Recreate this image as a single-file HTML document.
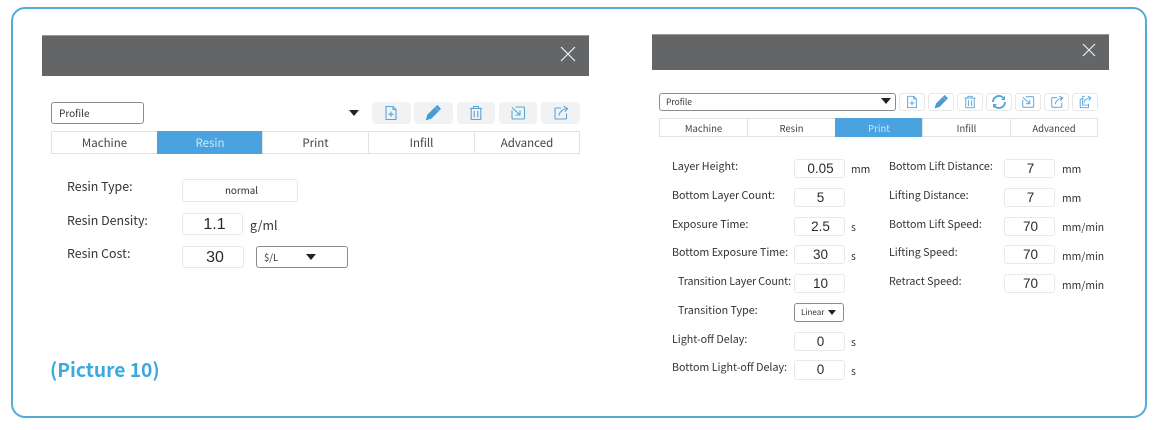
<!DOCTYPE html>
<html><head><meta charset="utf-8">
<style>
html,body{margin:0;padding:0;background:#fff}
#p{position:relative;width:1159px;height:430px;overflow:hidden;background:#fff;font-family:"Noto Sans CJK SC","Liberation Sans",sans-serif;color:#3a3a3a;filter:blur(.3px)}
#p div,#p svg{position:absolute;box-sizing:border-box}
.fr{left:11px;top:7px;width:1136px;height:411px;border:2px solid #52acd6;border-radius:14px}
.hd{background:#646566;border-top:1px solid #999}
.t{white-space:nowrap;line-height:14px}
.l{font-size:12.400px;color:#333}
.s{font-size:10.400px;color:#333}
.r{font-size:10.700px;color:#333}
.b{background:#fff;border:1px solid #e9e9e9;border-radius:3px;text-align:center;color:#2c2c2c;font-family:"Liberation Sans",sans-serif;font-size:13.500px;line-height:18px;padding-left:2px}
.bl{font-size:16px;line-height:22px;padding-left:4px}
.sel{background:#fff;border:1px solid #8d8d8d;border-radius:3px;color:#333}
.tab{border:1px solid #e2e2e2;text-align:center;color:#444;background:#fff;padding-left:0}
.tab.on{background:#4aa3de;color:#cfe6f6;border-color:#4aa3de}
.tl{top:131px;height:23px;line-height:22px;font-size:11.500px}
.tr{top:118px;height:19px;line-height:18px;font-size:9.500px}
.ib{background:#f1f2f3;border-radius:4px;top:102px;height:22px}
.ib2{background:#fff;border:1px solid #e8e8e8;border-radius:3px;top:93px;height:18px}
svg.i{fill:none;stroke:#5aa5d8;stroke-width:1.1}
.tri{width:0;height:0;border-left:5px solid transparent;border-right:5px solid transparent;border-top:6px solid #222}
</style></head><body>
<div id="p">
<svg width="0" height="0" style="position:absolute">
<defs>
<symbol id="new" viewBox="0 0 16 16"><path d="M3 1.500H10L13 4.500V14.500H3Z M10 1.500V4.500H13 M8 6.500V12 M5.300 9.200H10.700"/></symbol>
<symbol id="pen" viewBox="0 0 16 16"><path d="M1.500 14.500L2.800 10 9.800 3 13 6.200 6 13.200Z M10.800 2L12.200 .8 15.200 3.800 14 5.200Z" fill="#4a9ad6" stroke="#4a9ad6"/></symbol>
<symbol id="del" viewBox="0 0 16 16"><path d="M1.800 3.500H14.200 M5.500 3.500V1.500H10.500V3.500 M3.200 3.500V14.500H12.800V3.500 M6.200 6V12.500 M9.800 6V12.500"/></symbol>
<symbol id="ref" viewBox="0 0 16 16"><path d="M2 8A6 6 0 0 1 12.800 4.400 M14 8A6 6 0 0 1 3.200 11.600" stroke-width="2"/><path d="M14 2V6H10Z M2 14V10H6Z" fill="#5aa5d8" stroke="none"/></symbol>
<symbol id="imp" viewBox="0 0 16 16"><path d="M5.500 2H13.500A1 1 0 0 1 14.500 3V13A1 1 0 0 1 13.500 14H3A1 1 0 0 1 2 13V5.500 M2 2.500L9.500 9.500 M10 5.500V10H5.500"/></symbol>
<symbol id="exp" viewBox="0 0 16 16"><path d="M8 3H3A1 1 0 0 0 2 4V13A1 1 0 0 0 3 14H12.500A1 1 0 0 0 13.500 13V8.500 M6 10.500C6.500 7 9 4.500 14 3.500 M10.500 1.200L14.500 3.500 12 6.800"/></symbol>
<symbol id="exa" viewBox="0 0 16 16"><path d="M7 4.500H3.500A1 1 0 0 0 2.500 5.500V13.500A1 1 0 0 0 3.500 14.500H11A1 1 0 0 0 12 13.500V10 M5 3V2.500A1 1 0 0 1 6 1.500H8 M6.500 9.500C7 6.500 9.500 4 14 3.200 M11 1L14.500 3.200 12.500 6.500 M5 3.500V11.500H12"/></symbol>
</defs>
</svg>

<div class="fr"></div>

<!-- LEFT -->
<div class="hd" style="left:42px;top:35px;width:547px;height:41px"></div>
<svg style="left:560px;top:46px" width="16" height="16"><path d="M1 1L15 15M15 1L1 15" stroke="#f2f2f2" stroke-width="1.2"/></svg>
<div class="sel t" style="left:51px;top:102px;width:93px;height:22px;font-size:10px;line-height:20px;padding-left:7px">Profile</div>
<div class="tri" style="left:349px;top:110px"></div>
<div class="ib" style="left:372px;width:39px"></div>
<div class="ib" style="left:414px;width:39px"></div>
<div class="ib" style="left:457px;width:38px"></div>
<div class="ib" style="left:499px;width:38px"></div>
<div class="ib" style="left:541px;width:39px"></div>
<svg class="i" style="left:383px;top:105px" width="16" height="16"><use href="#new"/></svg>
<svg class="i" style="left:425px;top:105px" width="16" height="16"><use href="#pen"/></svg>
<svg class="i" style="left:468px;top:105px" width="16" height="16"><use href="#del"/></svg>
<svg class="i" style="left:510px;top:105px" width="16" height="16"><use href="#imp"/></svg>
<svg class="i" style="left:553px;top:105px" width="16" height="16"><use href="#exp"/></svg>

<div class="tab t tl" style="left:51px;width:107px">Machine</div>
<div class="tab on t tl" style="left:157px;width:106px">Resin</div>
<div class="tab t tl" style="left:262px;width:107px">Print</div>
<div class="tab t tl" style="left:368px;width:107px">Infill</div>
<div class="tab t tl" style="left:474px;width:106px">Advanced</div>

<div class="t l" style="left:67px;top:179px">Resin Type:</div>
<div class="t l" style="left:67px;top:213px">Resin Density:</div>
<div class="t l" style="left:67px;top:246px">Resin Cost:</div>
<div class="b" style="left:182px;top:179px;width:116px;height:23px;font-size:9.800px;line-height:21px;padding:0 0 0 3px;font-family:'Noto Sans CJK SC',sans-serif">normal</div>
<div class="b bl" style="left:182px;top:213px;width:61px;height:22px">1.1</div>
<div class="b bl" style="left:182px;top:246px;width:62px;height:22px">30</div>
<div class="t l" style="left:250px;top:218px">g/ml</div>
<div class="sel t" style="left:256px;top:246px;width:92px;height:22px;font-size:9.500px;line-height:21px;padding-left:7px">$/L</div>
<div class="tri" style="left:306px;top:254px"></div>

<div class="t" style="left:50px;top:356px;font-size:19.200px;line-height:26px;font-weight:700;color:#3ba9dc">(Picture 10)</div>

<!-- RIGHT -->
<div class="hd" style="left:652px;top:34px;width:457px;height:36px"></div>
<svg style="left:1082px;top:43px" width="14" height="14"><path d="M1 1L13 13M13 1L1 13" stroke="#f2f2f2" stroke-width="1.1"/></svg>
<div class="sel t" style="left:659px;top:93px;width:237px;height:18px;font-size:8.500px;line-height:16px;padding-left:6px">Profile</div>
<div class="tri" style="left:881px;top:98px"></div>
<div class="ib2" style="left:899px;width:26px"></div>
<div class="ib2" style="left:928px;width:26px"></div>
<div class="ib2" style="left:957px;width:26px"></div>
<div class="ib2" style="left:986px;width:26px"></div>
<div class="ib2" style="left:1015px;width:26px"></div>
<div class="ib2" style="left:1044px;width:25px"></div>
<div class="ib2" style="left:1072px;width:26px"></div>
<svg class="i" style="left:905px;top:95px" width="14" height="14"><use href="#new"/></svg>
<svg class="i" style="left:934px;top:95px" width="14" height="14"><use href="#pen"/></svg>
<svg class="i" style="left:963px;top:95px" width="14" height="14"><use href="#del"/></svg>
<svg class="i" style="left:991px;top:94px" width="16" height="16"><use href="#ref"/></svg>
<svg class="i" style="left:1021px;top:95px" width="14" height="14"><use href="#imp"/></svg>
<svg class="i" style="left:1050px;top:95px" width="14" height="14"><use href="#exp"/></svg>
<svg class="i" style="left:1078px;top:95px" width="14" height="14"><use href="#exa"/></svg>

<div class="tab t tr" style="left:659px;width:89px">Machine</div>
<div class="tab t tr" style="left:747px;width:89px">Resin</div>
<div class="tab on t tr" style="left:835px;width:88px">Print</div>
<div class="tab t tr" style="left:922px;width:89px">Infill</div>
<div class="tab t tr" style="left:1010px;width:88px">Advanced</div>

<div class="t r" style="left:672px;top:160px">Layer Height:</div>
<div class="t r" style="left:672px;top:189px">Bottom Layer Count:</div>
<div class="t r" style="left:672px;top:218px">Exposure Time:</div>
<div class="t r" style="left:672px;top:246px">Bottom Exposure Time:</div>
<div class="t r" style="left:678px;top:275px;letter-spacing:-.12px">Transition Layer Count:</div>
<div class="t r" style="left:678px;top:304px">Transition Type:</div>
<div class="t r" style="left:672px;top:333px">Light-off Delay:</div>
<div class="t r" style="left:672px;top:361px">Bottom Light-off Delay:</div>

<div class="b" style="left:794px;top:159px;width:51px;height:19px">0.05</div>
<div class="b" style="left:794px;top:188px;width:51px;height:19px">5</div>
<div class="b" style="left:794px;top:217px;width:51px;height:19px">2.5</div>
<div class="b" style="left:794px;top:245px;width:51px;height:19px">30</div>
<div class="b" style="left:794px;top:274px;width:51px;height:19px">10</div>
<div class="sel t" style="left:794px;top:303px;width:50px;height:19px;font-size:8px;line-height:18px;padding-left:6px">Linear</div>
<div class="tri" style="left:828px;top:310px;border-left-width:4px;border-right-width:4px;border-top-width:5px"></div>
<div class="b" style="left:794px;top:332px;width:51px;height:19px">0</div>
<div class="b" style="left:794px;top:360px;width:51px;height:20px">0</div>

<div class="t s" style="left:851px;top:162px">mm</div>
<div class="t s" style="left:851px;top:220px">s</div>
<div class="t s" style="left:851px;top:249px">s</div>
<div class="t s" style="left:851px;top:335px">s</div>
<div class="t s" style="left:851px;top:364px">s</div>

<div class="t r" style="left:889px;top:160px">Bottom Lift Distance:</div>
<div class="t r" style="left:889px;top:189px">Lifting Distance:</div>
<div class="t r" style="left:889px;top:218px">Bottom Lift Speed:</div>
<div class="t r" style="left:889px;top:246px">Lifting Speed:</div>
<div class="t r" style="left:889px;top:275px">Retract Speed:</div>

<div class="b" style="left:1004px;top:159px;width:51px;height:19px">7</div>
<div class="b" style="left:1004px;top:188px;width:51px;height:19px">7</div>
<div class="b" style="left:1004px;top:217px;width:51px;height:19px">70</div>
<div class="b" style="left:1004px;top:245px;width:51px;height:19px">70</div>
<div class="b" style="left:1004px;top:274px;width:51px;height:19px">70</div>

<div class="t s" style="left:1062px;top:162px">mm</div>
<div class="t s" style="left:1062px;top:191px">mm</div>
<div class="t s" style="left:1062px;top:220px">mm/min</div>
<div class="t s" style="left:1062px;top:249px">mm/min</div>
<div class="t s" style="left:1062px;top:278px">mm/min</div>
</div>
</body></html>
